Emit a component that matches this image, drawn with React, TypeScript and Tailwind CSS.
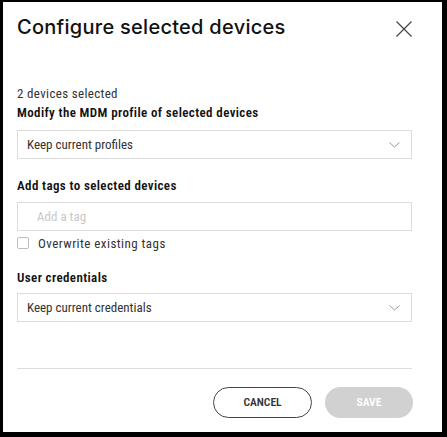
const Chevron = () => (
  <svg width="11" height="6" viewBox="0 0 11 6" fill="none" className="shrink-0">
    <path d="M0.5 0.5L5.5 5L10.5 0.5" stroke="#9a9a9a" strokeWidth="1" />
  </svg>
);

const SelectBox = ({ value }: { value: string }) => (
  <div className="flex h-[29px] items-center justify-between border border-[#dcdcdc] pl-[9px] pr-[11px] text-[13px] leading-[16px] text-[#333]">
    <span>{value}</span>
    <Chevron />
  </div>
);

export default function App() {
  return (
    <div className="h-[437px] w-[447px] bg-black pl-[3px] pt-[2px]">
      <div className="flex h-[430px] w-[439px] flex-col bg-white pl-[14px] pr-[30px] pt-[11px] font-['Roboto',sans-serif] [font-stretch:75%]">
        <div className="flex items-start justify-between">
          <h1 className="font-['Inter',sans-serif] text-[20px] font-medium leading-[28px] tracking-[0.27px] text-[#111] [font-stretch:100%]">
            Configure selected devices
          </h1>
          <button className="mt-[8px]" aria-label="Close">
            <svg width="16" height="16" viewBox="0 0 16 16" fill="none">
              <path d="M0.5 0.5L15.5 15.5M15.5 0.5L0.5 15.5" stroke="#444" strokeWidth="1.2" />
            </svg>
          </button>
        </div>

        <p className="mt-[45px] text-[13px] leading-[16px] tracking-[0.33px] text-[#333]">2 devices selected</p>
        <p className="mt-[3px] text-[13px] font-semibold leading-[16px] tracking-[0.38px] text-[#111]">
          Modify the MDM profile of selected devices
        </p>
        <div className="mt-[9px]">
          <SelectBox value="Keep current profiles" />
        </div>

        <p className="mt-[19px] text-[13px] font-semibold leading-[16px] tracking-[0.38px] text-[#111]">
          Add tags to selected devices
        </p>
        <div className="mt-[8px] flex h-[29px] items-center border border-[#dcdcdc] pl-[19px] text-[13px] leading-[16px] text-[#c8c8c8]">
          Add a tag
        </div>
        <label className="mt-[5px] flex items-start gap-[9px] text-[13px] leading-[16px] tracking-[0.45px] text-[#333]">
          <span className="mt-[1px] h-[12px] w-[12px] rounded-[2px] border border-[#bdbdbd]" />
          Overwrite existing tags
        </label>

        <p className="mt-[18px] text-[13px] font-semibold leading-[16px] tracking-[0.38px] text-[#111]">User credentials</p>
        <div className="mt-[7px]">
          <SelectBox value="Keep current credentials" />
        </div>

        <div className="mt-[46px] h-px bg-[#dedede]" />

        <div className="mt-[18px] flex justify-end gap-[13px]">
          <button className="flex h-[31px] w-[99px] items-center justify-center rounded-full border border-[#444] text-[11.5px] font-semibold text-[#333]">
            CANCEL
          </button>
          <button className="-mr-px flex h-[31px] w-[88px] items-center justify-center rounded-full bg-[#d1d1d1] text-[11.5px] font-semibold text-white">
            SAVE
          </button>
        </div>
      </div>
    </div>
  );
}
